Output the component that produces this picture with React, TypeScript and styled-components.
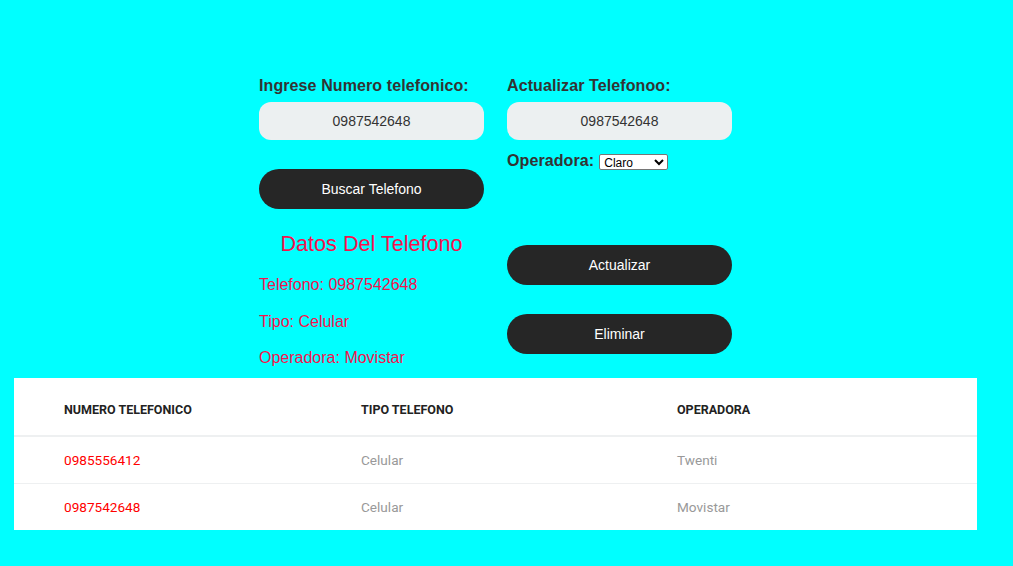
import React from "react";
import styled, { createGlobalStyle } from "styled-components";

const Global = createGlobalStyle`
  html, body { margin: 0; padding: 0; background: #00ffff; }
  body { font-family: Arial, "Liberation Sans", sans-serif; }
`;

const Page = styled.div`
  width: 1013px;
  min-height: 566px;
  padding-top: 77px;
  box-sizing: border-box;
`;

const Forms = styled.div`
  display: flex;
  gap: 23px;
  padding-left: 259px;
`;

const Column = styled.div`
  width: 225px;
  display: flex;
  flex-direction: column;
`;

const Label = styled.label`
  font-size: 16px;
  font-weight: bold;
  color: #333;
  line-height: 18px;
  height: 18px;
  letter-spacing: 0.1px;
`;

const Input = styled.input`
  margin-top: 7px;
  height: 38px;
  width: 225px;
  box-sizing: border-box;
  border: none;
  border-radius: 12px;
  background: #ecf0f1;
  text-align: center;
  font-family: Arial, "Liberation Sans", sans-serif;
  font-size: 14px;
  color: #333;
  outline: none;
`;

const Button = styled.button<{ $mt: number }>`
  margin-top: ${(p) => p.$mt}px;
  height: 40px;
  width: 225px;
  border: none;
  border-radius: 20px;
  background: #262626;
  color: #fff;
  font-family: Arial, "Liberation Sans", sans-serif;
  font-size: 14px;
  cursor: pointer;
`;

const DataTitle = styled.div`
  margin-top: 23px;
  text-align: center;
  font-size: 21.6px;
  line-height: 23px;
  color: #f5124d;
`;

const DataLine = styled.div<{ $mt: number }>`
  margin-top: ${(p) => p.$mt}px;
  font-size: 16px;
  line-height: 18px;
  color: #f5124d;
`;

const OperRow = styled.div`
  margin-top: 12px;
  display: flex;
  align-items: center;
  gap: 5px;
  height: 18px;
`;

const Select = styled.select`
  width: 69px;
  height: 16px;
  padding: 0;
  font-family: Arial, "Liberation Sans", sans-serif;
  font-size: 12px;
  border: 1px solid #767676;
  border-radius: 2px;
  background: #fff;
  color: #000;
  margin-top: 1px;
`;

const Table = styled.div`
  margin: 11px 0 0 14px;
  width: 963px;
  background: #fff;
  font-family: Roboto, "Liberation Sans", sans-serif;
`;

const Row = styled.div<{ $head?: boolean }>`
  display: grid;
  grid-template-columns: 297px 316px 1fr;
  height: ${(p) => (p.$head ? 58 : 47)}px;
  align-items: center;
  box-sizing: border-box;
  border-bottom: ${(p) => (p.$head ? "1px solid #eef0f1" : "none")};
  & + & {
    border-top: ${(p) => (p.$head ? "none" : "1px solid #eef0f1")};
  }
`;

const HeadCell = styled.div`
  padding-left: 50px;
  padding-top: 6px;
  font-size: 12.5px;
  font-weight: 700;
  color: #222;
  text-transform: uppercase;
`;

const Cell = styled.div<{ $red?: boolean }>`
  padding-left: 50px;
  font-size: 13.6px;
  color: ${(p) => (p.$red ? "#ff0000" : "#999")};
`;

const rows = [
  { num: "0985556412", tipo: "Celular", op: "Twenti" },
  { num: "0987542648", tipo: "Celular", op: "Movistar" },
];

export default function App() {
  return (
    <Page>
      <Global />
      <Forms>
        <Column>
          <Label>Ingrese Numero telefonico:</Label>
          <Input defaultValue="0987542648" />
          <Button $mt={29}>Buscar Telefono</Button>
          <DataTitle>Datos Del Telefono</DataTitle>
          <DataLine $mt={21}>Telefono: 0987542648</DataLine>
          <DataLine $mt={19}>Tipo: Celular</DataLine>
          <DataLine $mt={18}>Operadora: Movistar</DataLine>
        </Column>
        <Column>
          <Label>Actualizar Telefonoo:</Label>
          <Input defaultValue="0987542648" />
          <OperRow>
            <Label as="span">Operadora:</Label>
            <Select defaultValue="Claro">
              <option>Claro</option>
              <option>Movistar</option>
              <option>Twenti</option>
            </Select>
          </OperRow>
          <Button $mt={75}>Actualizar</Button>
          <Button $mt={29}>Eliminar</Button>
        </Column>
      </Forms>
      <Table>
        <Row $head>
          <HeadCell>Numero Telefonico</HeadCell>
          <HeadCell>Tipo Telefono</HeadCell>
          <HeadCell>Operadora</HeadCell>
        </Row>
        {rows.map((r) => (
          <Row key={r.num}>
            <Cell $red>{r.num}</Cell>
            <Cell>{r.tipo}</Cell>
            <Cell>{r.op}</Cell>
          </Row>
        ))}
      </Table>
    </Page>
  );
}
